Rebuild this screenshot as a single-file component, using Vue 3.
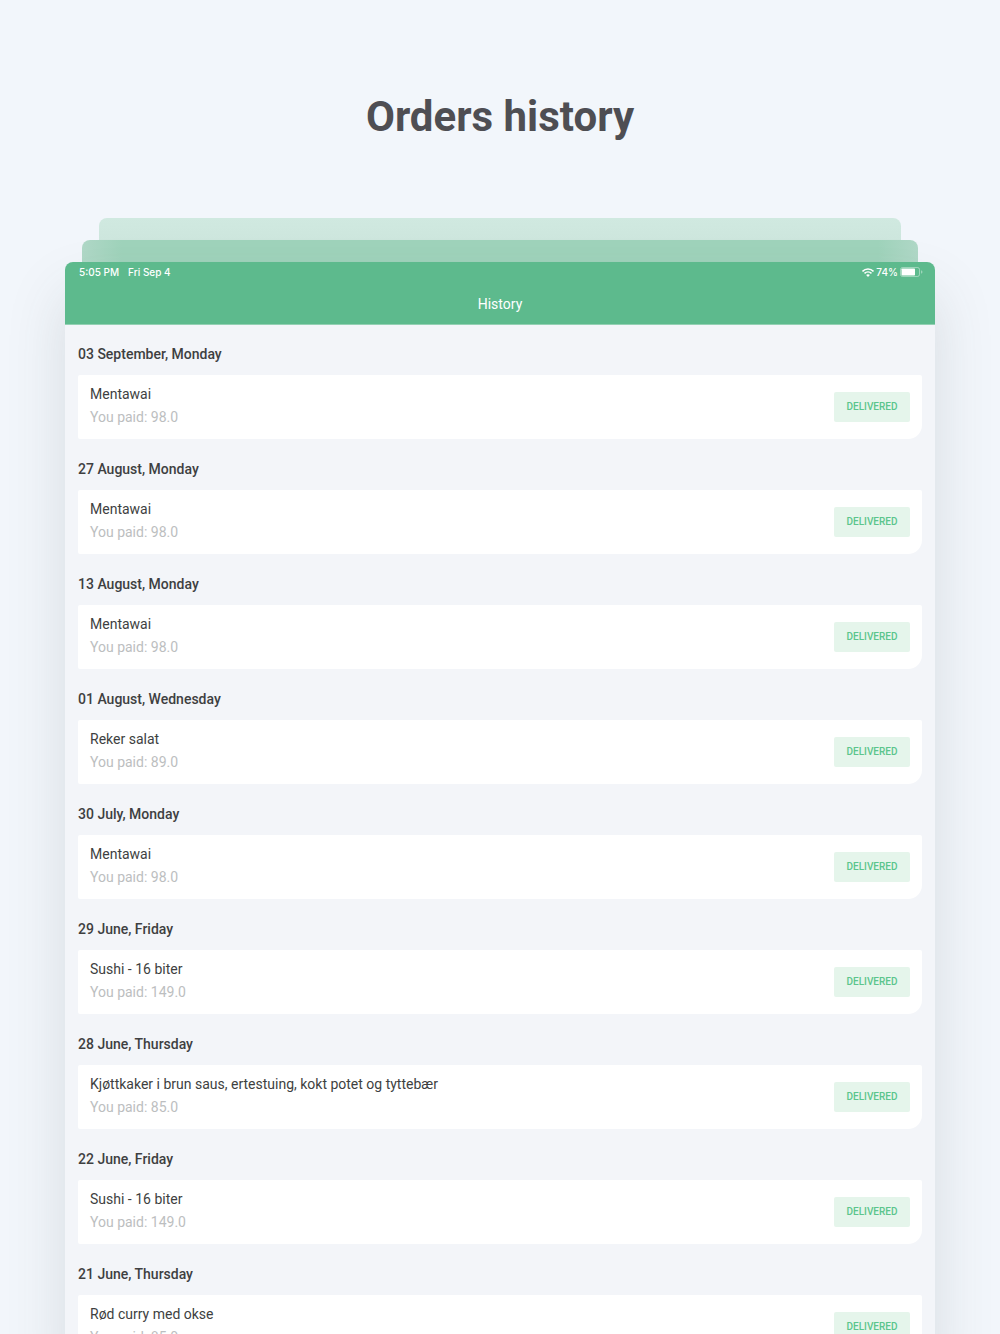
<script setup>
const orders = [
  { date: '03 September, Monday', name: 'Mentawai', paid: '98.0' },
  { date: '27 August, Monday', name: 'Mentawai', paid: '98.0' },
  { date: '13 August, Monday', name: 'Mentawai', paid: '98.0' },
  { date: '01 August, Wednesday', name: 'Reker salat', paid: '89.0' },
  { date: '30 July, Monday', name: 'Mentawai', paid: '98.0' },
  { date: '29 June, Friday', name: 'Sushi - 16 biter', paid: '149.0' },
  { date: '28 June, Thursday', name: 'Kjøttkaker i brun saus, ertestuing, kokt potet og tyttebær', paid: '85.0' },
  { date: '22 June, Friday', name: 'Sushi - 16 biter', paid: '149.0' },
  { date: '21 June, Thursday', name: 'Rød curry med okse', paid: '85.0' },
]
</script>

<template>
  <main class="page">
    <h1 class="title">Orders history</h1>
    <div class="layer layer-back"></div>
    <div class="layer layer-mid"></div>
    <section class="device">
      <header class="bar">
        <div class="status">
          <span>5:05 PM</span>
          <span>Fri Sep 4</span>
          <span class="indicators">
            <svg width="12" height="9" viewBox="0 0 12 9" fill="none" stroke="#fff" stroke-width="1.5" aria-hidden="true">
              <path d="M.5 3.4C3.5.2 8.5.2 11.5 3.4M2.5 5.4C4.500 3.400 7.500 3.400 9.500 5.400" />
              <path d="M6 9 4.100 7C5.200 6 6.800 6 7.900 7Z" fill="#fff" stroke="none" />
            </svg>
            <span>74%</span>
            <svg width="23" height="10" viewBox="0 0 23 10" aria-hidden="true">
              <rect x=".5" y=".5" width="19" height="9" rx="2" fill="none" stroke="#fff" stroke-opacity=".4" />
              <rect x="1.500" y="1.500" width="13.500" height="7" rx=".7" fill="#fff" />
              <path d="M21 3.300q1.500.4 1.500 1.700T21 6.700Z" fill="#fff" fill-opacity=".4" />
            </svg>
          </span>
        </div>
        <h2 class="heading">History</h2>
      </header>
      <div class="list">
        <section v-for="order in orders" :key="order.date" class="day">
          <h3 class="date">{{ order.date }}</h3>
          <article class="card">
            <div class="info">
              <p class="name">{{ order.name }}</p>
              <p class="paid">You paid: {{ order.paid }}</p>
            </div>
            <span class="badge">DELIVERED</span>
          </article>
        </section>
      </div>
    </section>
  </main>
</template>

<style>
body {
  margin: 0;
  background: #f2f6fb;
}
</style>

<style scoped>
.page {
  box-sizing: border-box;
  height: 100vh;
  overflow: hidden;
  padding-top: 89px;
  background: #f2f6fb;
  color: #3e3f41;
  font-family: Roboto, sans-serif;
}

h1, h2, h3, p {
  margin: 0;
}

.title {
  margin-bottom: 73px;
  font-size: 42px;
  line-height: 56px;
  font-weight: 700;
  text-align: center;
  color: #4e4e53;
}

.layer {
  height: 22px;
  border-radius: 8px 8px 0 0;
}

.layer-back {
  margin: 0 9.9%;
  background: linear-gradient(#d0e9e0, #cde6dd);
}

.layer-mid {
  margin: 0 8.2%;
  background: linear-gradient(90deg, #b0d8c7, #9fd3bb 40px, #9fd3bb calc(100% - 40px), #b0d8c7);
}

.device {
  margin: 0 6.5%;
  border-radius: 8px 8px 0 0;
  background: #f3f5f9;
  box-shadow: 0 32px 60px rgba(70, 75, 75, 0.15);
  position: relative;
}

.bar {
  height: 62px;
  border-bottom: 1px solid #93d0b3;
  border-radius: 8px 8px 0 0;
  background: #5dba8d;
  color: #fff;
}

.status {
  display: flex;
  align-items: center;
  gap: 9px;
  height: 20px;
  padding: 0 12px 0 14px;
  font-family: Inter, sans-serif;
  font-size: 10px;
  font-weight: 500;
}

.indicators {
  display: flex;
  align-items: center;
  gap: 2px;
  margin-left: auto;
}

.heading {
  padding-top: 12px;
  font-size: 14px;
  line-height: 20px;
  font-weight: 400;
  text-align: center;
}

.list {
  padding: 0 13px;
}

.date {
  padding: 20px 0 11px;
  font-size: 14px;
  line-height: 20px;
  font-weight: 500;
}

.day:first-child .date {
  padding-top: 19px;
}

.card {
  display: flex;
  align-items: center;
  justify-content: space-between;
  box-sizing: border-box;
  height: 64px;
  padding: 0 12px;
  border-radius: 2px 2px 14px 2px;
  background: #fff;
}

.info {
  padding-bottom: 3px;
  font-size: 14px;
  line-height: 23px;
}

.paid {
  color: #bcbec0;
}

.badge {
  width: 76px;
  border-radius: 2px;
  background: #e5f5eb;
  color: #5bc58c;
  font-size: 10px;
  line-height: 30px;
  font-weight: 500;
  text-align: center;
}
</style>
